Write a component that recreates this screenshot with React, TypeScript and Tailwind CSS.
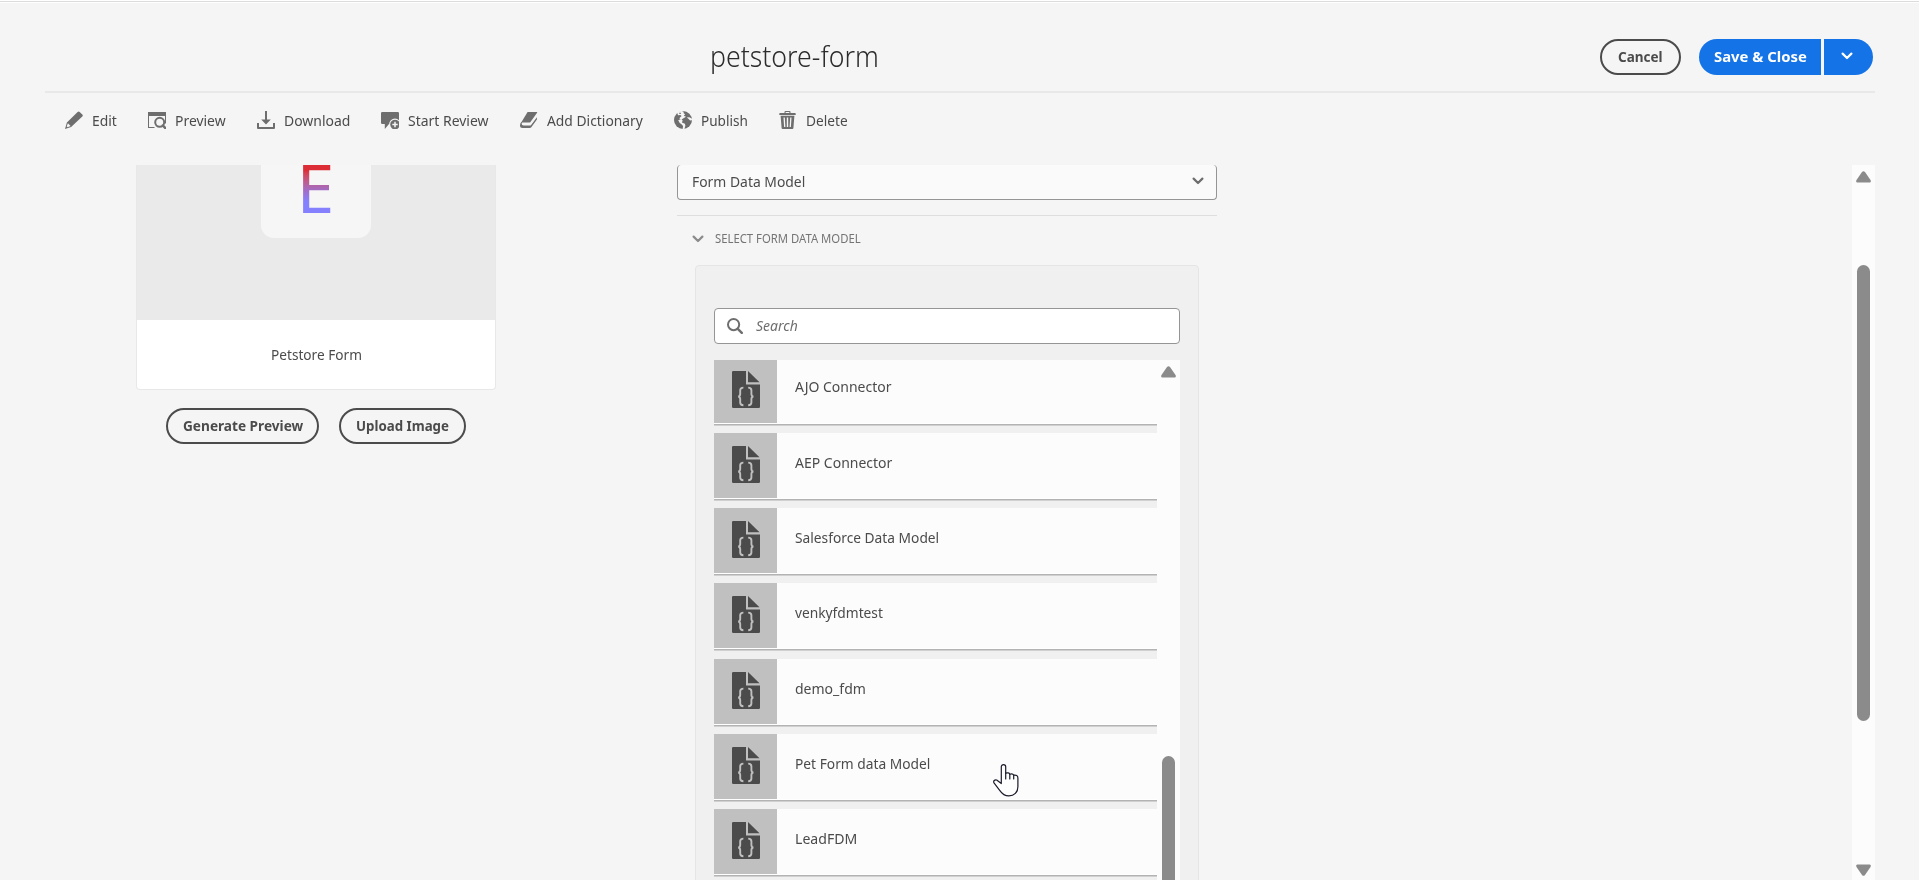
import { useLayoutEffect, useRef, useState, type ReactNode } from "react";

/** One line of text, condensed horizontally so that it fills its box. */
function Fit({ className, children }: { className: string; children: string }) {
  const ref = useRef<HTMLSpanElement>(null);
  const [scale, setScale] = useState(1);
  useLayoutEffect(() => {
    const el = ref.current;
    if (el && el.parentElement) {
      setScale(el.parentElement.clientWidth / el.offsetWidth);
    }
  }, []);
  return (
    <span className={`block shrink-0 whitespace-nowrap ${className}`}>
      <span ref={ref} className="inline-block origin-left" style={{ transform: `scaleX(${scale})` }}>
        {children}
      </span>
    </span>
  );
}

function Chevron({ className }: { className: string }) {
  return (
    <svg viewBox="0 0 12 8" className={`h-2 w-3 shrink-0 ${className}`} fill="none" stroke="currentColor" strokeWidth="2.2" strokeLinecap="round" strokeLinejoin="round">
      <path d="M1.6 1.6 6 6l4.400-4.400" />
    </svg>
  );
}

function Triangle({ down = false }: { down?: boolean }) {
  return (
    <svg viewBox="0 0 15 12" className={`h-3 w-[15px] shrink-0 text-[#8b8b8b] ${down ? "rotate-180" : ""}`} fill="currentColor">
      <path d="M6 1.100a1.900 1.900 0 0 1 3 0l5.500 8c.8 1.200.2 2.400-1.200 2.400H1.700C.3 11.500-.3 10.300.5 9.100z" />
    </svg>
  );
}

const EditIcon = (
  <>
    <path d="M12.600.9a1.500 1.500 0 0 1 2.100 0l2.600 2.500a1.500 1.500 0 0 1 0 2.100L6.100 16.100 0 18l1.900-6.400z" />
    <path d="M2.900 12.300 5.600 15.100 2.600 16.200 1.700 15.300z" fill="#f5f5f5" />
  </>
);
const PreviewIcon = (
  <>
    <path d="M0 1h18v11.500h-1V5H1v11h5.500v1H0z" />
    <circle cx="11.700" cy="11.300" r="4.500" fill="none" stroke="currentColor" strokeWidth="2" />
    <path d="m14.800 14.400 2.500 2.700" stroke="currentColor" strokeWidth="2.400" strokeLinecap="round" />
  </>
);
const DownloadIcon = (
  <>
    <path d="M8 0h2v8.500h3.800L9 13.500 4.200 8.500H8z" />
    <path d="M0 12h2v4h14v-4h2v5q0 1-1 1H1q-1 0-1-1z" />
  </>
);
const ReviewIcon = (
  <>
    <path d="M1.200 1h15.600q1.200 0 1.200 1.200v9.600q0 1.200-1.200 1.200H8l-4.200 5v-5H1.200Q0 13 0 11.800V2.200Q0 1 1.200 1z" />
    <circle cx="14" cy="13.500" r="5.900" fill="#f5f5f5" />
    <circle cx="14" cy="13.500" r="4.800" />
    <path d="M14 10.800v5.400M11.300 13.500h5.400" stroke="#f5f5f5" strokeWidth="1.500" />
  </>
);
const DictionaryIcon = (
  <>
    <path d="M7.600 1h9.100q.9 0 .4.800L10.500 11q-.4.600-1.100.6H3Q1.600 11.600.6 12.500z" />
    <path d="M16.900 6.300v2.300l-5.400 7.500q-.7.900-1.800.9H2.500Q0 17 0 14.500q0-1.600 1.200-3.400h.6q-.6 3.500 2 3.500h6q.8 0 1.300-.7z" />
  </>
);
const PublishIcon = (
  <>
    <circle cx="9" cy="9" r="9" />
    <path d="M4.600.6 7.200 0l2.300.4.200 1.800 1.400 1.100-1.300 1.500 2.200.9-2.900 1.800-1.900 1.300-1.900-1.500L7.600 5 6.300 3.900 4 4.200 3.300 2z" fill="#f5f5f5" />
    <path d="m7.200 8 1.500 1.500-.8 1.900 3 1.300.5 2.100-1.200 3.700-1.600-.4.500-3-1.900-2.200-1.500-.9-1.500-2.800z" fill="#f5f5f5" />
    <path d="m17.800 7.600-2.500-1.300-2.600.2 1.700 1.300 1.700 1.800 2-.5z" fill="#f5f5f5" />
    <path d="M5.300 1.700h1.500v1.200H5.300z" />
  </>
);
const DeleteIcon = (
  <>
    <path d="M5.500 2V1q0-1 1-1h4q1 0 1 1v1H16q.7 0 .7.800V4H.3V2.800Q.3 2 1 2zM6.600 2h3.800V1H6.600z" fillRule="evenodd" />
    <path fillRule="evenodd" d="M1.600 4.800h13.800l-1 12.200q0 1-1 1H3.600q-1 0-1-1zM4.500 6.500l.6 9.500h1.300L5.800 6.500zM7.800 6.500V16h1.400V6.500zM11.200 6.500l-.6 9.500h1.300l.6-9.500z" />
  </>
);

const actions: { icon: ReactNode; label: string; width: string }[] = [
  { icon: EditIcon, label: "Edit", width: "w-[25px]" },
  { icon: PreviewIcon, label: "Preview", width: "w-[51px]" },
  { icon: DownloadIcon, label: "Download", width: "w-[66px]" },
  { icon: ReviewIcon, label: "Start Review", width: "w-[81px]" },
  { icon: DictionaryIcon, label: "Add Dictionary", width: "w-[96px]" },
  { icon: PublishIcon, label: "Publish", width: "w-[47px]" },
  { icon: DeleteIcon, label: "Delete", width: "w-[42px]" },
];

function ModelIcon() {
  return (
    <svg viewBox="0 0 28 37" className="h-[37px] w-7" fill="#4b4b4b">
      <path d="M1.200 0H14v13.500h14v22.300q0 1.200-1.200 1.200H1.200Q0 37 0 35.800V1.200Q0 0 1.200 0z" />
      <path d="M16 0v11.300h11.500z" />
      <path d="M11.400 16.600c-2.400 0-3.200.8-3.200 2.700v3.600c0 1.500-.5 2.300-1.900 2.600 1.400.3 1.900 1.100 1.900 2.600v3.400c0 1.900.8 2.700 3.200 2.700M16.200 16.600c2.400 0 3.200.8 3.200 2.700v3.600c0 1.500.5 2.300 1.900 2.600-1.400.3-1.900 1.100-1.900 2.600v3.400c0 1.900-.8 2.700-3.200 2.700" fill="none" stroke="#c0c0c0" strokeWidth="1.900" />
    </svg>
  );
}

const models = [
  { name: "AEP Connector", width: "w-[97px]" },
  { name: "Salesforce Data Model", width: "w-[144px]" },
  { name: "venkyfdmtest", width: "w-[88px]" },
  { name: "demo_fdm", width: "w-[71px]" },
  { name: "Pet Form data Model", width: "w-[135px]" },
  { name: "LeadFDM", width: "w-[62px]" },
];

function ModelRow({ name, width, first = false }: { name: string; width: string; first?: boolean }) {
  return (
    <div className={`shrink-0 border-b border-white bg-[#fcfcfc] shadow-[0_1px_0_#b3b3b3,0_2px_0_#d0d0d0] ${first ? "mb-[9px] h-16" : "mb-[9.2px] h-[66px]"}`}>
      <div className="flex h-full">
        <div className={`flex w-[63px] justify-center bg-[#c0c0c0] pl-px ${first ? "pt-[11px]" : "pt-[13px]"}`}>
          <ModelIcon />
        </div>
        <div className={`pl-[18px] ${first ? "pt-4" : "pt-[19px]"}`}>
          <Fit className={width}>{name}</Fit>
        </div>
      </div>
    </div>
  );
}

function OutlineButton({ label, box, text }: { label: string; box: string; text: string }) {
  return (
    <button className={`flex h-9 items-center justify-center rounded-full border-2 border-[#4b4b4b] pb-[3px] font-bold text-[#4b4b4b] ${box}`}>
      <Fit className={text}>{label}</Fit>
    </button>
  );
}

export default function App() {
  return (
    <div className="relative flex h-[880px] w-[1919px] flex-col overflow-hidden bg-[#f5f5f5] font-['Noto_Sans',sans-serif] text-[15px] leading-5 text-[#4b4b4b]">
      <div className="h-[3px] shrink-0 border-y border-white bg-[#dcdcdc]" />

      <header className="ml-[45px] flex h-[90px] w-[1830px] shrink-0 border-b-2 border-[#e8e8e8]">
        <h1 className="mt-[33px] ml-[665px] text-[30px] leading-10 font-light text-[#2c2c2c]">
          <Fit className="w-[169px]">petstore-form</Fit>
        </h1>
        <div className="mt-9 mr-0.5 ml-auto flex">
          <OutlineButton label="Cancel" box="w-[81px]" text="w-[45px]" />
          <div className="ml-[18px] flex gap-[3px] font-bold text-white">
            <button className="flex h-9 w-[122px] items-center justify-center rounded-l-full bg-[#1473e6] pb-[3px]">
              <Fit className="w-[93px]">Save &amp; Close</Fit>
            </button>
            <button className="flex h-9 w-[49px] items-center rounded-r-full bg-[#1473e6] pb-0.5 pl-[17px]">
              <Chevron className="text-white" />
            </button>
          </div>
        </div>
      </header>

      <nav className="flex h-[72px] shrink-0 gap-[31px] pl-[65px]">
        {actions.map((a) => (
          <div key={a.label} className="flex items-start gap-[9px]">
            <svg viewBox="0 0 18 18" className="mt-[18px] h-[18px] w-[18px] shrink-0 text-[#6e6e6e]" fill="currentColor">
              {a.icon}
            </svg>
            <Fit className={`mt-[17px] ${a.width}`}>{a.label}</Fit>
          </div>
        ))}
      </nav>

      <main className="flex h-[715px] w-[1875px] shrink-0 overflow-hidden">
        <section className="ml-[136px] flex w-[360px] flex-col">
          <div className="h-[225px] shrink-0 overflow-hidden rounded-b border border-t-0 border-[#e8e8e8] bg-white">
            <div className="flex h-[155px] justify-center bg-[#eaeaea]">
              <div className="flex h-[73px] w-[110px] justify-center rounded-b-[13px] bg-[#f6f6f6]">
                <span className="h-[52px] bg-linear-to-b from-[#dc2c35] from-10% via-[#a36bc4] via-48% to-[#8480fe] to-70% bg-clip-text pr-px text-[68px] leading-[43px] text-transparent">
                  E
                </span>
              </div>
            </div>
            <div className="flex h-[68px] items-center justify-center">
              <Fit className="w-[91px]">Petstore Form</Fit>
            </div>
          </div>
          <div className="mt-[18px] ml-[30px] flex gap-5">
            <OutlineButton label="Generate Preview" box="w-[153px]" text="w-[120px]" />
            <OutlineButton label="Upload Image" box="w-[127px]" text="w-[93px]" />
          </div>
        </section>

        <section className="ml-[181px] flex w-[540px] flex-col">
          <div className="flex h-[35px] shrink-0 items-center justify-between rounded rounded-t-sm border border-t-0 border-[#959595] bg-[#fafafa] pr-3 pb-0.5 pl-3.5">
            <Fit className="w-[113px]">Form Data Model</Fit>
            <Chevron className="text-[#6e6e6e]" />
          </div>
          <div className="mt-[15px] h-px shrink-0 bg-[#dedede]" />
          <div className="flex h-[49px] shrink-0 items-center gap-[11px] pb-1 pl-[15px] text-xs text-[#747474]">
            <Chevron className="text-[#8b8b8b]" />
            <Fit className="w-[146px]">SELECT FORM DATA MODEL</Fit>
          </div>
          <div className="ml-[18px] h-[640px] w-[504px] shrink-0 rounded border border-[#e5e5e5] bg-[#f0f0f0] px-[18px] pt-[42px]">
            <div className="flex h-9 items-center gap-[13px] rounded border border-[#959595] bg-white pl-3 text-[#6e6e6e]">
              <svg viewBox="0 0 16 16" className="h-4 w-4 shrink-0" fill="none" stroke="currentColor" strokeWidth="2">
                <circle cx="6.600" cy="6.600" r="5.600" />
                <path d="m10.800 10.800 4 4" strokeWidth="2.400" strokeLinecap="round" />
              </svg>
              <Fit className="w-[42px] pb-0.5 italic">Search</Fit>
            </div>
            <div className="mt-4 flex h-[560px] overflow-hidden">
              <div className="flex w-[443px] flex-col">
                <ModelRow name="AJO Connector" width="w-[97px]" first />
                {models.map((m) => (
                  <ModelRow key={m.name} name={m.name} width={m.width} />
                ))}
              </div>
              <div className="flex w-[23px] flex-col items-center bg-[#fcfcfc] pt-1.5">
                <Triangle />
                <div className="mt-[378px] h-[300px] w-[13px] shrink-0 rounded-full bg-[#8b8b8b]" />
              </div>
            </div>
          </div>
        </section>

        <div className="ml-auto flex w-[23px] flex-col items-center bg-[#fcfcfc] pt-1.5 pb-1">
          <Triangle />
          <div className="mt-[82px] h-[456px] w-[13px] shrink-0 rounded-full bg-[#8b8b8b]" />
          <div className="mt-auto">
            <Triangle down />
          </div>
        </div>
      </main>

      <svg viewBox="0 0 26 33" className="absolute top-[764px] left-[993px] h-[33px] w-[26px]" fill="#fff" stroke="#1b1b2b" strokeWidth="1.200" strokeLinejoin="round" strokeLinecap="round">
        <path d="M8.300 19.500V2.800a2.200 2.200 0 0 1 4.400 0v6.400c1.800-.8 3.600-.2 4.100 1 1.700-.6 3.400-.1 3.900 1 2.400-.5 4.200.5 4.200 2.800v8.500c0 6-3.800 9.400-9 9.400-4.600 0-6.900-2.200-9.200-5.600L1 18.900c-1-1.900.7-3.500 2.700-2.900z" />
        <path d="M12.700 9v6M16.800 10.200v4.800M20.700 11.200v3.800" fill="none" />
      </svg>
    </div>
  );
}
